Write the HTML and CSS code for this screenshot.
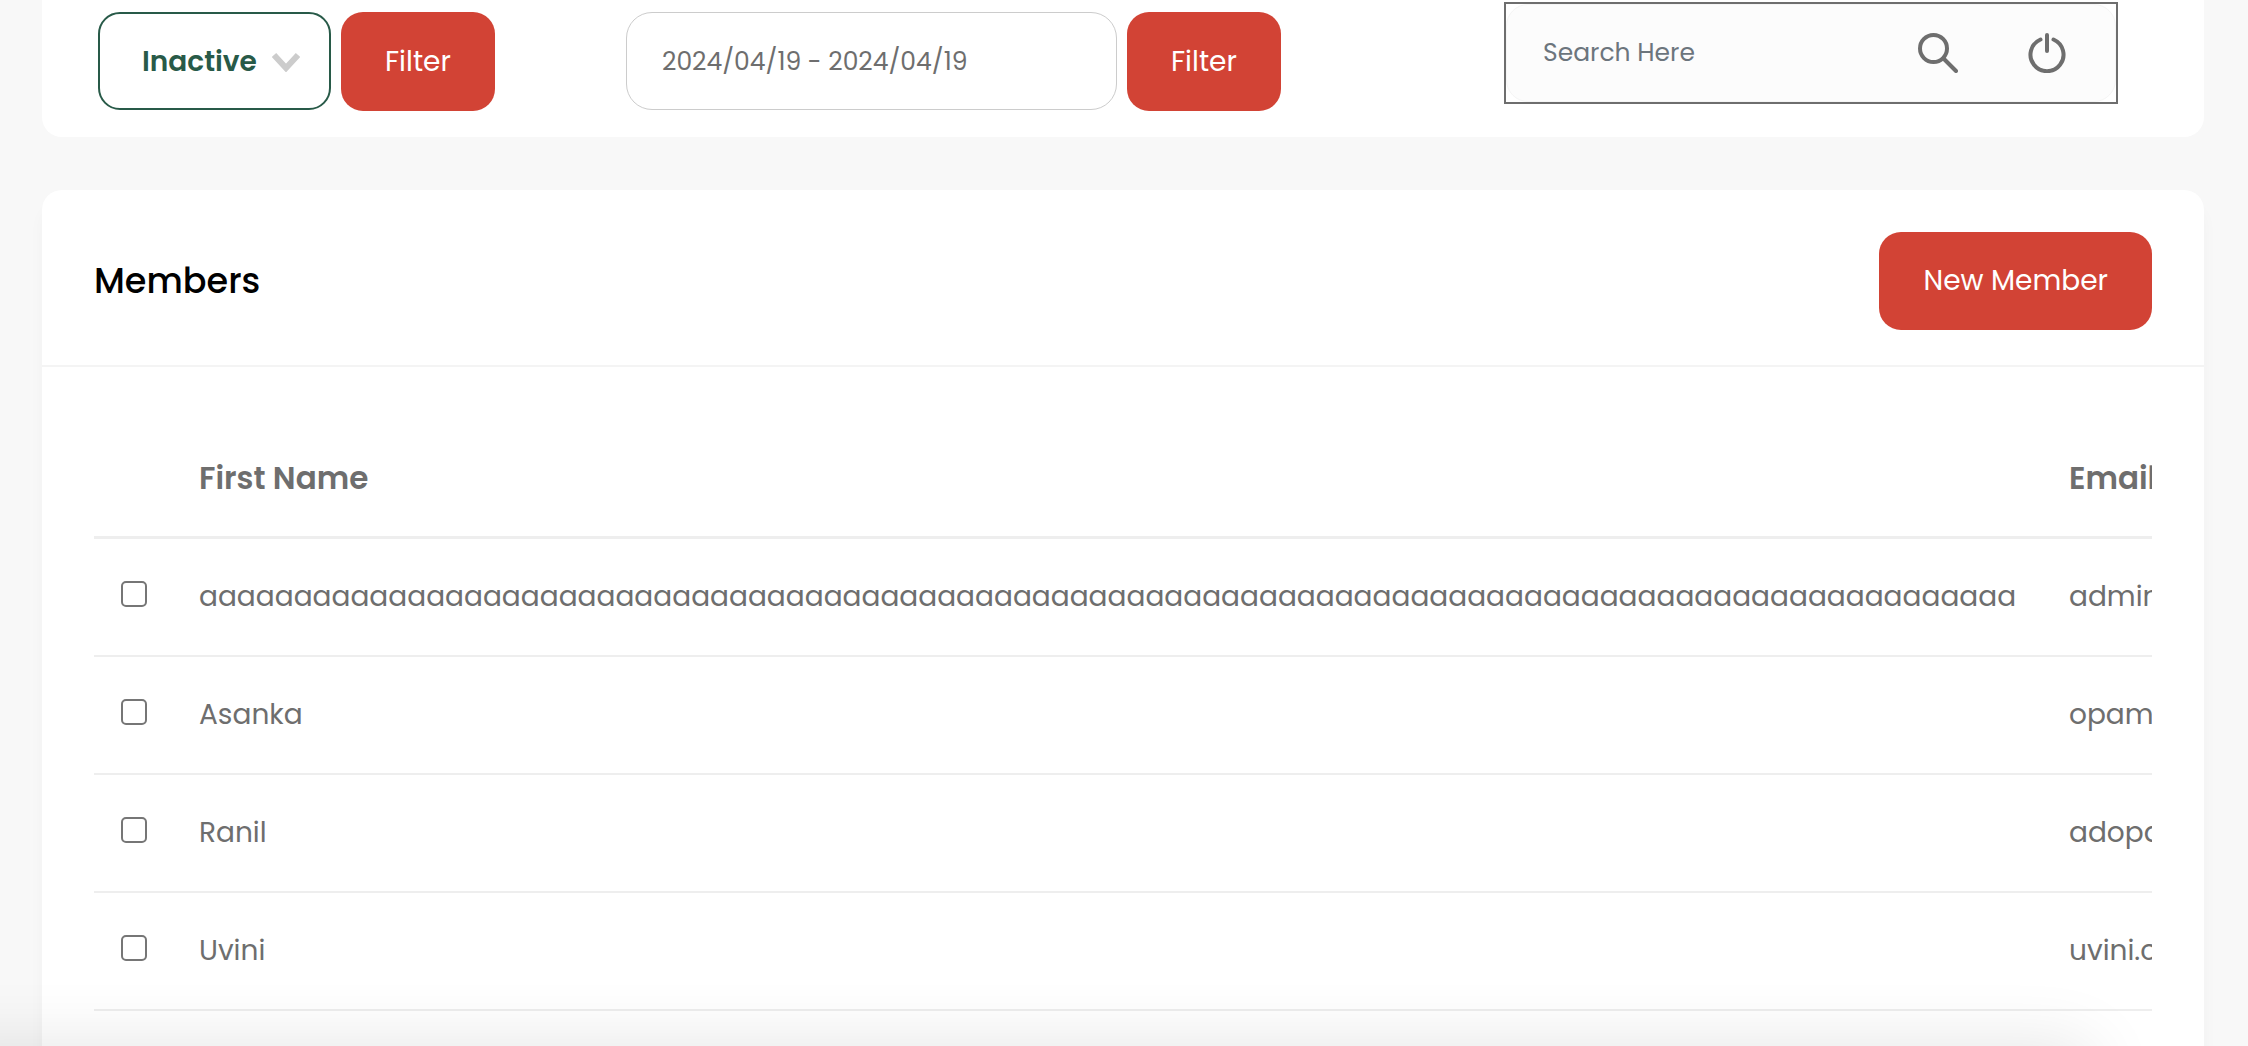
FILE: index.html
```html
<!DOCTYPE html>
<html lang="en">
<head>
  <meta charset="utf-8">
  <meta name="viewport" content="width=device-width, initial-scale=1">
  <title>Members</title>
  <link rel="stylesheet" href="styles.css">
</head>
<body>
  <main class="page">
    <section class="card toolbar" aria-label="Filters">
      <form class="filter-group">
        <div class="select-wrap">
          <select class="status-select" aria-label="Status">
            <option>Active</option>
            <option selected>Inactive</option>
          </select>
          <svg class="chevron" viewBox="0 0 28 20" aria-hidden="true"><path d="M2 3l12 13L26 3" fill="none" stroke="#ccc" stroke-width="6"/></svg>
        </div>
        <button class="btn" type="button">Filter</button>
      </form>
      <form class="filter-group">
        <input class="date-input" type="text" value="2024/04/19 - 2024/04/19" aria-label="Date range">
        <button class="btn" type="button">Filter</button>
      </form>
      <form class="search">
        <input class="search-input" type="text" placeholder="Search Here" aria-label="Search">
        <button class="icon-btn" type="button" aria-label="Search">
          <svg class="icon" viewBox="0 0 40 40"><g fill="none" stroke="#6e6e6e" stroke-width="4" stroke-linecap="round"><circle cx="15.500" cy="15.500" r="13.500"/><path d="M25.500 25.500L38 38"/></g></svg>
        </button>
        <button class="icon-btn" type="button" aria-label="Reset">
          <svg class="icon" viewBox="0 0 40 40"><g fill="none" stroke="#6e6e6e" stroke-width="4" stroke-linecap="round"><path d="M20 2v16M13.500 6.500a16.500 16.500 0 1 0 13 0"/></g></svg>
        </button>
      </form>
    </section>

    <section class="card members">
      <header class="card-header">
        <h1 class="card-title">Members</h1>
        <button class="btn" type="button">New Member</button>
      </header>
      <div class="table-wrap">
        <table class="table">
          <colgroup><col class="col-check"><col class="col-name"><col class="col-email"></colgroup>
          <thead>
            <tr><td></td><th scope="col">First Name</th><th scope="col">Email</th></tr>
          </thead>
          <tbody>
            <tr>
              <td><input class="check" type="checkbox" aria-label="Select member 1"></td>
              <td>aaaaaaaaaaaaaaaaaaaaaaaaaaaaaaaaaaaaaaaaaaaaaaaaaaaaaaaaaaaaaaaaaaaaaaaaaaaaaaaaaaaaaaaaaaaaaaaa</td>
              <td>admin</td>
            </tr>
            <tr>
              <td><input class="check" type="checkbox" aria-label="Select Asanka"></td>
              <td>Asanka</td>
              <td>opama</td>
            </tr>
            <tr>
              <td><input class="check" type="checkbox" aria-label="Select Ranil"></td>
              <td>Ranil</td>
              <td>adopa</td>
            </tr>
            <tr>
              <td><input class="check" type="checkbox" aria-label="Select Uvini"></td>
              <td>Uvini</td>
              <td>uvini.c</td>
            </tr>
          </tbody>
        </table>
      </div>
    </section>
  </main>
  <div class="bottom-shade" aria-hidden="true"></div>
</body>
</html>
```

FILE: styles.css
```css
*,
*::before,
*::after {
  box-sizing: border-box;
}

body {
  margin: 0;
  background: #f8f8f8;
  color: #6e6e6e;
  font-family: Poppins, Inter, "Liberation Sans", sans-serif;
  font-size: 28px;
  line-height: 42px;
}

button,
input,
select {
  font: inherit;
  color: inherit;
  margin: 0;
}

.page {
  display: flex;
  flex-direction: column;
  gap: 53px;
  min-height: 100vh;
  padding: 0 44px 0 42px;
}

.card {
  background: #fff;
  border-radius: 20px;
}

.toolbar {
  display: grid;
  grid-template-columns: 528fr 880fr 610fr;
  padding: 4px 88px 26px 56px;
  border-radius: 0 0 20px 20px;
}

.filter-group {
  display: flex;
  align-items: flex-start;
  gap: 10px;
  min-width: 0;
  padding-top: 8px;
}

.btn {
  height: 98px;
  padding: 0 44px;
  border: 0;
  border-radius: 22px;
  background: #d24335;
  color: #fff;
}

.filter-group .btn {
  height: 99px;
}

.select-wrap {
  display: grid;
  align-items: center;
  width: 233px;
}

.select-wrap > * {
  grid-area: 1 / 1;
}

.status-select {
  width: 100%;
  height: 98px;
  padding: 2px 44px 0 42px;
  border: 2px solid #285a48;
  border-radius: 22px;
  background: #fff;
  color: #285a48;
  font-weight: 600;
  appearance: none;
}

.chevron {
  justify-self: end;
  width: 28px;
  height: 20px;
  margin: 2px 31px 0 0;
  pointer-events: none;
}

.date-input {
  width: 491px;
  height: 98px;
  padding: 2px 35px 0;
  border: 1px solid #ccc;
  border-radius: 26px;
  background: #fff;
  font-size: 25px;
}

.search {
  position: relative;
  display: flex;
  align-items: center;
  gap: 69px;
  min-width: 0;
  height: 98px;
  padding: 0 48px 0 36px;
  border: 1px solid #f5f5f5;
  border-radius: 22px;
  background: #fcfcfc;
}

/* square focus frame round the search field */
.search::after {
  content: "";
  position: absolute;
  inset: -3px;
  border: 2px solid #6e6e6e;
  pointer-events: none;
}

.search-input {
  flex: 1;
  min-width: 0;
  padding: 0;
  border: 0;
  background: none;
  font-size: 25px;
}

.search-input::placeholder {
  color: #6c757d;
  opacity: 1;
}

.icon-btn {
  display: flex;
  padding: 0;
  border: 0;
  background: none;
}

.icon {
  width: 40px;
  height: 40px;
}

.members {
  flex: 1;
  border-radius: 20px 20px 0 0;
  box-shadow: 0 16px 16px rgba(0, 0, 0, 0.03);
}

.card-header {
  display: flex;
  align-items: center;
  justify-content: space-between;
  padding: 42px 52px 35px;
  border-bottom: 2px solid #f4f4f4;
}

.card-title {
  margin: 0;
  color: #000;
  font-size: 35px;
  font-weight: 500;
}

.table-wrap {
  margin: 52px 52px 0;
  overflow: hidden;
}

.table {
  width: 2400px;
  table-layout: fixed;
  border-collapse: separate;
  border-spacing: 0;
}

.col-check {
  width: 79px;
}

.col-name {
  width: 1870px;
}

.table th,
.table td {
  height: 118px;
  padding: 0 26px;
  border-bottom: 2px solid #eee;
  text-align: left;
  white-space: nowrap;
}

.table td:first-child {
  padding: 0 0 0 27px;
}

.table thead th,
.table thead td {
  height: 120px;
  border-bottom-width: 3px;
  font-size: 31px;
  font-weight: 600;
}

.check {
  display: block;
  width: 26px;
  height: 26px;
  margin-bottom: 6px;
  border: 2px solid #767676;
  border-radius: 5px;
  background: #fff;
  appearance: none;
}

.check:checked {
  background: #285a48;
}

.bottom-shade {
  position: fixed;
  top: 100%;
  left: -80px;
  right: 7%;
  height: 80px;
  box-shadow: 0 0 70px rgba(0, 0, 0, 0.11);
  pointer-events: none;
}
```
